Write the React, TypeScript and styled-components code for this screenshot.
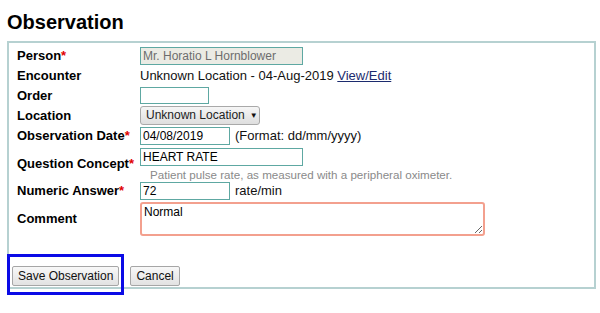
import React from 'react';
import styled, { createGlobalStyle } from 'styled-components';

const GlobalStyle = createGlobalStyle`
    html, body {
        margin: 0;
        min-height: 100%;
        font-family: "Liberation Sans", Arial, sans-serif;
        color: #000;
        background: #fff;
    }
`;

const rows = [
    { label: 'Person', required: true, h: 19 },
    { label: 'Encounter', required: false, h: 19 },
    { label: 'Order', required: false, h: 18 },
    { label: 'Location', required: false, h: 20 },
    { label: 'Observation Date', required: true, h: 19 },
    { label: 'Question Concept', required: true, h: 34 },
    { label: 'Numeric Answer', required: true, h: 19 },
    { label: 'Comment', required: false, h: 35 },
];

function App() {
    const fields = [
        <TextInput $w={163} value="Mr. Horatio L Hornblower" disabled readOnly />,
        <Plain>
            Unknown Location - 04-Aug-2019 <Link href="#">View/Edit</Link>
        </Plain>,
        <TextInput $w={69} $h={17} defaultValue="" />,
        <SelectBox>
            <span>Unknown Location</span>
            <Arrow>▼</Arrow>
        </SelectBox>,
        <Inline>
            <TextInput $w={90} defaultValue="04/08/2019" />
            <Plain>(Format: dd/mm/yyyy)</Plain>
        </Inline>,
        <Stack>
            <TextInput $w={163} defaultValue="HEART RATE" />
            <Hint>Patient pulse rate, as measured with a peripheral oximeter.</Hint>
        </Stack>,
        <Inline>
            <TextInput $w={90} defaultValue="72" />
            <Plain>rate/min</Plain>
        </Inline>,
        <Comment defaultValue="Normal" />,
    ];

    return (
        <>
            <GlobalStyle />
            <Page>
                <Heading>Observation</Heading>
                <FormBox>
                    <FormGrid>
                        {rows.map((row, i) => (
                            <React.Fragment key={row.label}>
                                <Label $h={row.h}>
                                    {row.label}
                                    {row.required && <Star>*</Star>}
                                </Label>
                                <Field $h={row.h}>{fields[i]}</Field>
                            </React.Fragment>
                        ))}
                    </FormGrid>
                    <ButtonRow>
                        <Highlighted>
                            <Button>Save Observation</Button>
                            <Marker />
                        </Highlighted>
                        <Button>Cancel</Button>
                    </ButtonRow>
                </FormBox>
            </Page>
        </>
    );
}

const Page = styled.div`
    padding: 11px 7px 24px 7px;
`;

const Heading = styled.h2`
    margin: 0 0 7px 0;
    font-size: 20px;
    line-height: 23px;
    font-weight: bold;
`;

const FormBox = styled.div`
    box-sizing: border-box;
    width: 589px;
    height: 248px;
    border: 2px solid #b6d1d1;
    padding: 3px 3px 1px 3px;
    display: flex;
    flex-direction: column;
`;

const FormGrid = styled.div`
    display: grid;
    grid-template-columns: 123px 1fr;
    row-gap: 1px;
    margin-left: 5px;
`;

const Label = styled.div<{ $h: number }>`
    height: ${(p) => p.$h}px;
    display: flex;
    align-items: center;
    font-size: 13px;
    font-weight: bold;
`;

const Star = styled.span`
    color: #e00000;
`;

const Field = styled.div<{ $h: number }>`
    height: ${(p) => p.$h}px;
    display: flex;
    align-items: center;
`;

const Plain = styled.span`
    font-size: 13px;
    color: #111;
    white-space: nowrap;
`;

const Link = styled.a`
    color: #1c2b6e;
    text-decoration: underline;
`;

const TextInput = styled.input<{ $w: number; $h?: number }>`
    box-sizing: border-box;
    width: ${(p) => p.$w}px;
    height: ${(p) => p.$h || 18}px;
    margin: 0;
    padding: 0 2px;
    border: 1px solid #5ea8a2;
    border-radius: 0;
    font-family: "Liberation Sans", Arial, sans-serif;
    font-size: 12px;
    color: #000;
    background: #fff;
    outline: none;

    &:disabled {
        background: #ebebe4;
        color: #6d6d6d;
    }
`;

const SelectBox = styled.div`
    box-sizing: border-box;
    width: 120px;
    height: 19px;
    padding: 0 5px;
    display: flex;
    align-items: center;
    gap: 5px;
    font-size: 12px;
    color: #222;
    border: 1px solid #a9a9a9;
    border-radius: 3px;
    background: linear-gradient(#f6f6f6, #dedede);
    white-space: nowrap;
    flex-shrink: 0;
`;

const Arrow = styled.span`
    font-size: 8px;
    color: #111;
`;

const Inline = styled.div`
    display: flex;
    align-items: center;
    gap: 5px;
`;

const Stack = styled.div`
    display: flex;
    flex-direction: column;
    align-self: flex-start;
    padding-top: 2px;
`;

const Hint = styled.div`
    margin: 2px 0 0 10px;
    font-size: 11.6px;
    line-height: 14px;
    color: #8a8a8a;
    white-space: nowrap;
`;

const Comment = styled.textarea`
    box-sizing: border-box;
    width: 345px;
    height: 34px;
    margin: 0;
    padding: 1px 2px;
    border: 2px solid #f3a08e;
    border-radius: 3px;
    font-family: "Liberation Sans", Arial, sans-serif;
    font-size: 12px;
    color: #000;
    outline: none;
`;

const ButtonRow = styled.div`
    margin-top: auto;
    display: flex;
    align-items: flex-start;
    gap: 11px;
`;

const Highlighted = styled.span`
    position: relative;
    display: flex;
    height: 20px;
`;

const Marker = styled.span`
    position: absolute;
    top: -12px;
    left: -5px;
    width: 117px;
    height: 41px;
    box-sizing: border-box;
    border: 3px solid #0b0be6;
    pointer-events: none;
`;

const Button = styled.button`
    box-sizing: border-box;
    height: 20px;
    margin: 0;
    padding: 0 5px;
    font-family: "Liberation Sans", Arial, sans-serif;
    font-size: 12px;
    color: #111;
    border: 1px solid #a6a6a6;
    border-radius: 2px;
    background: linear-gradient(#f8f8f8, #e2e2e2);
`;

export default App;
